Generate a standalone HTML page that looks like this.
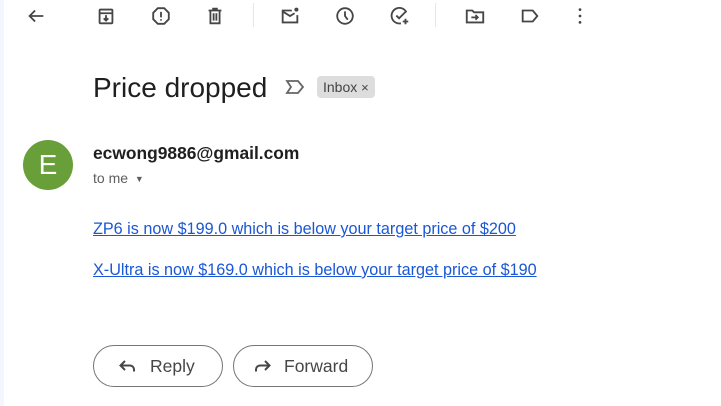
<!DOCTYPE html>
<html><head><meta charset="utf-8"><style>
body{margin:0;width:721px;height:406px;background:#fff;position:relative;overflow:hidden;font-family:"Liberation Sans",Arial,sans-serif;color:#1f1f1f}
.strip{position:absolute;left:0;top:0;width:4px;height:406px;background:#f3f6fc}
.ic{position:absolute;top:5px}
svg{fill:none;stroke:#444746;stroke-width:2}
.sep{position:absolute;top:3px;width:1px;height:24px;background:#e6e6e6}
h1{position:absolute;left:93px;top:72px;margin:0;font-weight:400;font-size:28px;color:#1f1f1f}
.chip{position:absolute;left:317px;top:76px;height:22px;padding:0 6px;background:#dddddd;border-radius:4px;font-size:14px;line-height:22px;color:#444}
.av{position:absolute;left:23px;top:140px;width:50px;height:50px;border-radius:50%;background:#689f38;color:#fff;font-size:28px;text-align:center;line-height:50px}
.from{position:absolute;left:93px;top:143px;font-weight:700;font-size:17.4px;color:#1f1f1f}
.to{position:absolute;left:93px;top:170px;font-size:14px;color:#5e5e5e}
a{position:absolute;left:93px;font-size:16.2px;color:#1a57d6;text-decoration:underline}
.btn{position:absolute;top:345px;height:42px;border:1px solid #747775;border-radius:22px;box-sizing:border-box;font-size:17.5px;line-height:40px;color:#444746}
</style></head><body>
<div class="strip"></div>
<svg class="ic" style="left:25px" width="22" height="22" viewBox="0 0 24 24"><path d="M20 12H5M11 6l-6 6 6 6"/></svg>
<svg class="ic" style="left:95px" width="22" height="22" viewBox="0 0 24 24"><rect x="5" y="5" width="14" height="15" rx="1"/><path d="M5 9h14M12 11v6M9.5 14.5L12 17l2.5-2.5"/></svg>
<svg class="ic" style="left:150px" width="22" height="22" viewBox="0 0 24 24"><path d="M8.5 3.5h7l5 5v7l-5 5h-7l-5-5v-7z"/><path d="M12 7.5v6M12 15.5v1.5"/></svg>
<svg class="ic" style="left:204px" width="22" height="22" viewBox="0 0 24 24"><path d="M5 6h14M9 4h6M7 6v14h10V6M10.5 9v8M13.5 9v8"/></svg>
<div class="sep" style="left:253px"></div>
<svg class="ic" style="left:279px" width="22" height="22" viewBox="0 0 24 24"><path d="M14 6H4v13h16v-8"/><path d="M4 7l8 5 5-3"/><circle cx="19" cy="5" r="2.2" fill="#444746" stroke="none"/></svg>
<svg class="ic" style="left:334px" width="22" height="22" viewBox="0 0 24 24"><circle cx="12" cy="12" r="8.5"/><path d="M12 7v5l3 4"/></svg>
<svg class="ic" style="left:389px" width="22" height="22" viewBox="0 0 24 24"><path d="M19 8a8.5 8.5 0 1 0-6 12"/><path d="M8 11.5l3 3 7-7M18 15v6M15 18h6"/></svg>
<div class="sep" style="left:435px"></div>
<svg class="ic" style="left:464px" width="22" height="22" viewBox="0 0 24 24"><path d="M3 6h6l2 2h10v11H3z"/><path d="M8 13.5h7M12.5 11l2.5 2.5-2.5 2.5"/></svg>
<svg class="ic" style="left:519px" width="22" height="22" viewBox="0 0 24 24"><path d="M4 6h11l5 6-5 6H4z"/></svg>
<svg class="ic" style="left:569px" width="22" height="22" viewBox="0 0 24 24"><circle cx="12" cy="5" r="1.5" fill="#444746" stroke="none"/><circle cx="12" cy="12" r="1.5" fill="#444746" stroke="none"/><circle cx="12" cy="19" r="1.5" fill="#444746" stroke="none"/></svg>
<h1>Price dropped</h1>
<svg style="position:absolute;left:285px;top:79px" width="20" height="16" viewBox="0 0 20 16"><path d="M2 2h11l5 6-5 6H2l4-6z" stroke="#666" stroke-width="1.8"/></svg>
<div class="chip">Inbox <span style="font-size:13px">×</span></div>
<div class="av">E</div>
<div class="from">ecwong9886@gmail.com</div>
<div class="to">to me <span style="font-size:9px;position:relative;top:-1px;left:3px">▼</span></div>
<a style="top:220px">ZP6 is now $199.0 which is below your target price of $200</a>
<a style="top:261px">X-Ultra is now $169.0 which is below your target price of $190</a>
<div class="btn" style="left:93px;width:130px"><svg style="position:absolute;left:24px;top:12px" width="20" height="16" viewBox="0 0 20 16"><path d="M7 3L2.5 7.5 7 12M3 7.5h9a4 4 0 0 1 4 4v2"/></svg><span style="position:absolute;left:56px">Reply</span></div>
<div class="btn" style="left:233px;width:140px"><svg style="position:absolute;left:18px;top:12px" width="20" height="16" viewBox="0 0 20 16"><path d="M13 3l4.5 4.5L13 12M17 7.5H8a4 4 0 0 0-4 4v2"/></svg><span style="position:absolute;left:50px">Forward</span></div>
</body></html>
